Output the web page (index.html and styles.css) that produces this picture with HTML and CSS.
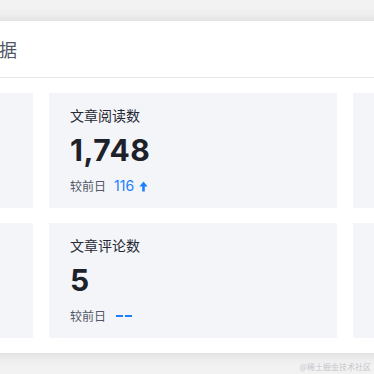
FILE: index.html
```html
<!DOCTYPE html>
<html lang="zh-CN">
<head>
<meta charset="utf-8">
<link rel="stylesheet" href="styles.css">
</head>
<body>
<div class="page">
  <section class="panel">
    <header class="panel-head"><h2 class="panel-title">数据</h2></header>
    <div class="grid">
      <div class="stat stat-empty"></div>
      <div class="stat">
        <div class="stat-label">文章阅读数</div>
        <div class="stat-value">1,748</div>
        <div class="stat-diff">较前日 <span class="diff-num">116</span>
          <svg class="arrow" width="9" height="11" viewBox="0 0 9 11"><path d="M4.5 0.5 L8.6 5.6 L5.8 5.6 L5.8 10.5 L3.2 10.5 L3.2 5.6 L0.4 5.6 Z" fill="#1e80ff"/></svg>
        </div>
      </div>
      <div class="stat stat-empty"></div>
      <div class="stat stat-empty"></div>
      <div class="stat">
        <div class="stat-label">文章评论数</div>
        <div class="stat-value">5</div>
        <div class="stat-diff">较前日 <span class="diff-none"><i></i><i></i></span></div>
      </div>
      <div class="stat stat-empty"></div>
    </div>
  </section>
  <div class="watermark">@稀土掘金技术社区</div>
</div>
</body>
</html>
```

FILE: styles.css
```css
html, body {
  margin: 0;
  padding: 0;
}
body {
  width: 374px;
  height: 374px;
  overflow: hidden;
  background: #f2f2f3;
  font-family: Inter, "Noto Sans CJK SC", sans-serif;
}
.page {
  position: relative;
  width: 374px;
  height: 374px;
  padding-top: 21px;
  box-sizing: border-box;
}
.panel {
  margin-left: -275px;
  width: 936px;
  background: #fff;
  box-shadow: 0 0 14px rgba(0, 0, 0, 0.12);
}
.panel-head {
  height: 56px;
  border-bottom: 1px solid #e4e6eb;
  display: flex;
  align-items: center;
  padding-left: 256px;
}
.panel-title {
  margin: 0;
  font-size: 18px;
  font-weight: 400;
  color: #515767;
  font-family: "Noto Sans CJK SC", sans-serif;
}
.grid {
  display: grid;
  grid-template-columns: repeat(3, 288px);
  column-gap: 16px;
  row-gap: 15px;
  padding: 15px 20px 15px 20px;
}
.stat {
  background: #f4f5f8;
  height: 115px;
  box-sizing: border-box;
  padding: 11px 21px 13px;
  display: flex;
  flex-direction: column;
}
.stat-label {
  font-family: "Noto Sans CJK SC", sans-serif;
  font-size: 14px;
  line-height: 22px;
  color: #252933;
}
.stat-value {
  margin-top: 6px;
  font-size: 30px;
  line-height: 36px;
  font-weight: 700;
  color: #1d2129;
  letter-spacing: 0.5px;
}
.stat-diff {
  margin-top: 8px;
  font-size: 12px;
  line-height: 20px;
  color: #515767;
  display: flex;
  align-items: center;
  font-family: "Noto Sans CJK SC", sans-serif;
}
.diff-num {
  margin-left: 8px;
  font-family: Inter, sans-serif;
  font-size: 14px;
  color: #1e80ff;
}
.arrow {
  margin-left: 5px;
}
.diff-none {
  margin-left: 10px;
  display: flex;
  gap: 2px;
}
.diff-none i {
  display: block;
  width: 7px;
  height: 1.5px;
  background: #1e80ff;
}
.watermark {
  position: absolute;
  right: 3px;
  bottom: 2px;
  font-family: "Noto Sans CJK SC", sans-serif;
  font-size: 8px;
  line-height: 10px;
  color: #c4c6ca;
}
```
